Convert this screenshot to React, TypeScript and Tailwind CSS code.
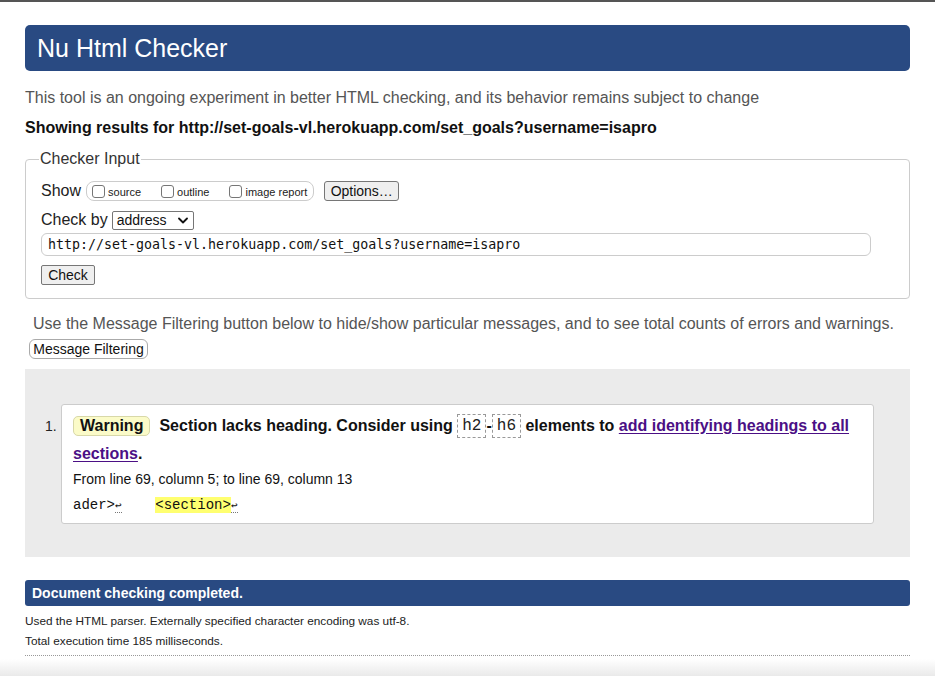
import React from 'react';

const sans = "font-['Liberation_Sans',Arial,sans-serif]";

function CodeBox({ children }: { children: React.ReactNode }) {
  return (
    <code className="inline-block border border-dashed border-[#999] bg-white px-[4px] align-[1px] leading-[22px] font-['Liberation_Mono',monospace] text-[16px] font-normal text-[#222]">
      {children}
    </code>
  );
}

function Lf() {
  return <span className="border-b border-dotted border-[#777] text-[11px] leading-none">↩</span>;
}

export default function App() {
  return (
    <div className={`${sans} min-h-[676px] bg-white border-t-2 border-[#555] text-[#222]`}>
      <div className="px-[25px] pt-[23px]">
        {/* Title bar */}
        <h1 className="h-[46px] rounded-[5px] bg-[#294a82] pl-[12px] text-[25px] leading-[46px] text-white">
          Nu Html Checker
        </h1>

        <p className="mt-[17px] text-[16px] leading-[20px] text-[#555]">
          This tool is an ongoing experiment in better HTML checking, and its behavior remains subject to change
        </p>
        <p className="mt-[10px] text-[16px] font-bold leading-[20px] text-[#111]">
          Showing results for http://set-goals-vl.herokuapp.com/set_goals?username=isapro
        </p>

        {/* Checker input */}
        <fieldset className="mt-[11px] rounded-[4px] border border-[#ccc] pl-[15px] pr-[38px] pb-[11px]">
          <legend className="-ml-[2px] px-[1px] text-[16px] leading-[20px] text-[#333]">Checker Input</legend>

          <div className="mt-[11px] flex h-[22px] items-center">
            <span className="text-[16px] text-[#222]">Show</span>
            <div className="ml-[5px] flex h-[20px] items-center whitespace-nowrap rounded-[8px] border border-[#ccc] pl-[5px] pr-[6px] text-[11px] text-[#222]">
              <span className="inline-block h-[13px] w-[13px] rounded-[3px] border border-[#767676] bg-white" />
              <span className="ml-[3px] mt-[3px]">source</span>
              <span className="ml-[20px] inline-block h-[13px] w-[13px] rounded-[3px] border border-[#767676] bg-white" />
              <span className="ml-[3px] mt-[3px]">outline</span>
              <span className="ml-[20px] inline-block h-[13px] w-[13px] rounded-[3px] border border-[#767676] bg-white" />
              <span className="ml-[3px] mt-[3px]">image report</span>
            </div>
            <button className="ml-[10px] h-[20px] w-[75px] rounded-[3px] border border-[#767676] bg-[#efefef] text-[14px] leading-[18px] text-[#111]">
              Options…
            </button>
          </div>

          <div className="mt-[7px] flex h-[22px] items-center">
            <span className="text-[16px] text-[#222]">Check by</span>
            <div className="ml-[4px] flex h-[19px] w-[82px] items-center justify-between rounded-[2px] border border-[#767676] bg-white pl-[4px] pr-[5px] text-[14px] text-[#111]">
              <span>address</span>
              <svg width="10" height="7" viewBox="0 0 10 7" fill="none">
                <path d="M1 1.5 5 5.5 9 1.5" stroke="#111" strokeWidth="1.8" strokeLinecap="round" strokeLinejoin="round" />
              </svg>
            </div>
          </div>

          <div className="mt-[2px] flex h-[23px] items-center rounded-[6px] border border-[#ccc] bg-white pl-[6px] font-['DejaVu_Sans_Mono',monospace] text-[13.3px] text-[#111]">
            http://set-goals-vl.herokuapp.com/set_goals?username=isapro
          </div>

          <button className="mt-[9px] h-[20px] w-[54px] rounded-[2px] border border-[#767676] bg-[#efefef] text-[14px] leading-[18px] text-[#111]">
            Check
          </button>
        </fieldset>

        <p className="mt-[15px] pl-[8px] text-[16px] leading-[20px] text-[#555]">
          Use the Message Filtering button below to hide/show particular messages, and to see total counts of errors and warnings.
        </p>
        <button className="ml-[4px] mt-[5px] h-[20px] w-[119px] rounded-[6px] border border-[#aaa] bg-white text-[14px] leading-[18px] text-[#111]">
          Message Filtering
        </button>

        {/* Results */}
        <div className="mt-[8px] h-[188px] bg-[#ebebeb] pl-[20px] pr-[36px] pt-[35px]">
          <ol className="flex">
            <li className="flex w-full">
              <span className="mt-[12px] w-[16px] text-[14px] leading-[20px] text-[#222]">1.</span>
              <div className="h-[120px] flex-1 rounded-[3px] border border-[#ccc] bg-white pl-[11px] pr-[20px] pt-[7px]">
                <p className="text-[16px] font-bold leading-[27.5px] text-[#111]">
                  <span className="mr-[9px] inline-block rounded-[5px] border border-[#d8d8a8] bg-[#fbfbc8] px-[6px] leading-[18px]">
                    Warning
                  </span>
                  Section lacks heading. Consider using <CodeBox>h2</CodeBox>-<CodeBox>h6</CodeBox> elements to{' '}
                  <a className="text-[#4b0f85] underline underline-offset-2" href="#">
                    add identifying headings to all sections
                  </a>
                  .
                </p>
                <p className="mt-[-1px] text-[14px] leading-[26px] text-[#111]">
                  From line 69, column 5; to line 69, column 13
                </p>
                <p className="font-['Liberation_Mono',monospace] text-[14px] leading-[26px] text-[#111] whitespace-pre">
                  ader&gt;<Lf />{'    '}<span className="bg-[#ffff70]">&lt;section&gt;</span><Lf />
                </p>
              </div>
            </li>
          </ol>
        </div>

        {/* Footer */}
        <div className="mt-[23px] h-[26px] rounded-[3px] bg-[#294a82] pl-[7px] text-[14px] font-bold leading-[26px] text-white">
          Document checking completed.
        </div>
        <p className="mt-[7px] text-[11.8px] leading-[16px] text-[#222]">
          Used the HTML parser. Externally specified character encoding was utf-8.
        </p>
        <p className="mt-[4px] text-[11.8px] leading-[16px] text-[#222]">Total execution time 185 milliseconds.</p>
        <div className="mt-[6px] border-t border-dotted border-[#999]" />
      </div>
      <div className="mt-[3px] h-[20px] bg-gradient-to-b from-white to-[#e6e6e6]" />
    </div>
  );
}
